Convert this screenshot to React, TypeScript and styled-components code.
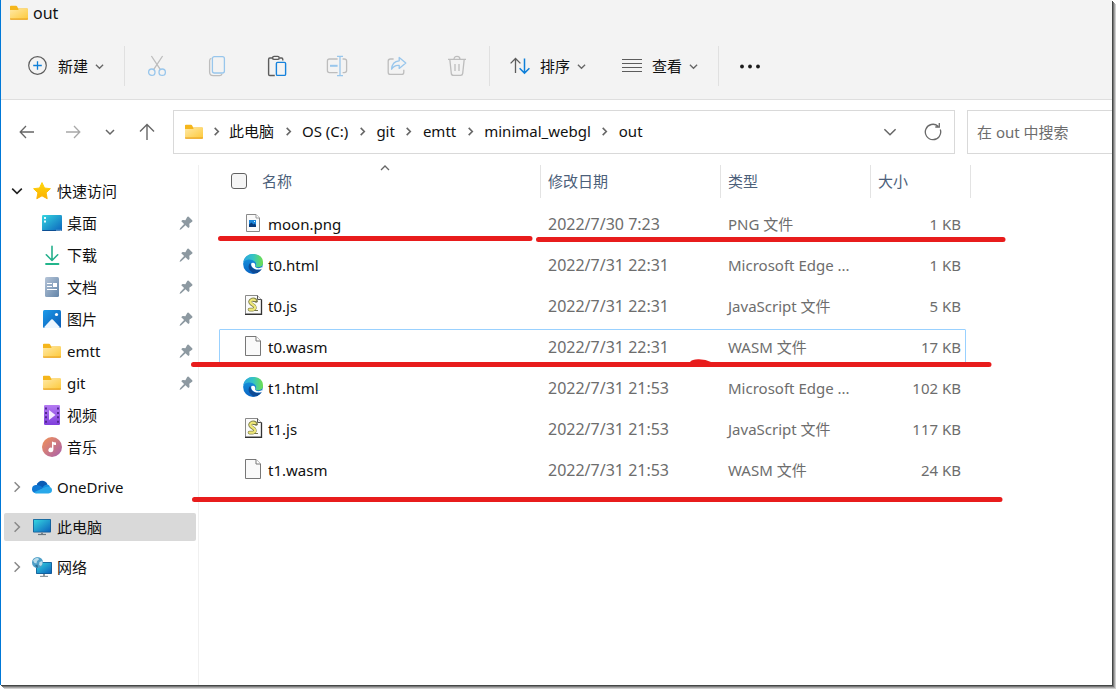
import React from "react";
import styled, { createGlobalStyle, css } from "styled-components";

const GlobalStyle = createGlobalStyle`
  *, *::before, *::after { box-sizing: border-box; }
  body {
    margin: 0;
    background: #fff;
    color: #111;
    font-family: "Noto Sans", "Noto Sans CJK SC", sans-serif;
    font-size: 15px;
    line-height: 20px;
  }
  button, input { font: inherit; color: inherit; }
  svg { display: block; flex: none; }
`;

/* ---------- window frame ---------- */

const Page = styled.div`
  display: flex;
  min-height: 100vh;
  padding: 0 4px 4px 0;
  overflow: hidden;
`;

const Window = styled.div`
  position: relative;
  flex: 1;
  min-width: 0;
  display: flex;
  flex-direction: column;
  border-left: 1px solid #0078d7;
  background: #fff;
  box-shadow: 1px 1px 0 #444746, 2px 2px 0 #777, 3px 3px 0 #a6a6a6, 4px 4px 0 #cfcfcf;
`;

const Header = styled.header`
  background: #f3f3f3;
  border-bottom: 1px solid #dedede;
`;

const TitleBar = styled.div`
  display: flex;
  align-items: center;
  gap: 4px;
  height: 33px;
  padding: 0 0 8px 8px;
`;

const Title = styled.h1`
  margin: 0;
  font-size: 16px;
  font-weight: 400;
`;

const Toolbar = styled.div`
  display: flex;
  align-items: center;
  height: 66px;
  padding-left: 9px;
`;

const PlainButton = styled.button`
  display: flex;
  align-items: center;
  justify-content: center;
  padding: 0;
  border: 0;
  background: none;
`;

const ToolButton = styled(PlainButton)<{ $narrow?: boolean }>`
  width: ${(p) => (p.$narrow ? 58 : 60)}px;
  height: 40px;
`;

const LabelButton = styled(PlainButton)`
  height: 40px;
  padding: 0 18px;
`;

const ButtonLabel = styled.span`
  margin: 0 7px 0 10px;
`;

const Divider = styled.span`
  width: 1px;
  height: 40px;
  margin: 0 2px;
  background: #e0e0e0;
`;

/* ---------- address row ---------- */

const AddressRow = styled.div`
  display: flex;
  align-items: center;
  padding: 10px 0 11px 3px;
`;

const NavButton = styled(PlainButton)<{ $small?: boolean }>`
  width: ${(p) => (p.$small ? 28 : 46)}px;
  height: 44px;
`;

const AddressBox = styled.nav`
  flex: 1;
  min-width: 0;
  display: flex;
  align-items: center;
  height: 44px;
  margin: 0 12px 0 3px;
  padding-left: 10px;
  border: 1px solid #d9d9d9;
`;

const Crumbs = styled.ol`
  flex: 1;
  display: flex;
  margin: 0;
  padding: 0 0 2px;
  list-style: none;
`;

const CrumbArrow = styled.span`
  display: flex;
  justify-content: center;
  width: 28px;
`;

const Crumb = styled.li`
  display: flex;
  align-items: center;
  white-space: nowrap;

  a {
    color: #111;
    text-decoration: none;
  }

  &:first-child ${CrumbArrow} {
    width: 25px;
  }
`;

const BoxButton = styled(PlainButton)`
  width: 43px;
  height: 42px;
`;

const SearchBox = styled.input`
  flex: none;
  width: 145px;
  height: 44px;
  padding: 0 9px;
  border: 1px solid #d9d9d9;
  border-right: 0;
  border-radius: 0;
  background: #fff;
  outline: none;

  &::placeholder {
    color: #6d6d6d;
    opacity: 1;
  }
`;

/* ---------- body ---------- */

const Body = styled.div`
  flex: 1;
  display: flex;
`;

const Sidebar = styled.nav`
  width: 198px;
  flex: none;
  padding: 10px 2px 0 3px;
  border-right: 1px solid #f0f0f0;

  ul {
    margin: 0;
    padding: 0;
    list-style: none;
  }
`;

const SideLink = styled.a<{ $child?: boolean; $selected?: boolean; $lead?: boolean }>`
  display: flex;
  align-items: center;
  gap: 5px;
  height: 28px;
  margin-bottom: 12px;
  border-radius: 2px;
  color: #111;
  text-decoration: none;
  background: ${(p) => (p.$selected ? "#d9d9d9" : "none")};

  ${(p) =>
    p.$lead &&
    css`
      height: 32px;
      margin-bottom: 0;
    `}
  ${(p) =>
    p.$child &&
    css`
      height: 32px;
      margin-bottom: 0;
      padding: 0 3px 0 38px;
    `}
`;

const ChildList = styled.ul`
  && {
    margin-bottom: 10px;
  }
`;

const Twisty = styled.span`
  display: flex;
  justify-content: center;
  width: 23px;
  padding-left: 2px;
`;

const SideText = styled.span`
  flex: 1;
`;

const Files = styled.main`
  flex: 1;
  min-width: 0;
  padding-left: 20px;
`;

const Table = styled.table`
  display: block;

  thead, tbody {
    display: block;
  }
`;

const HeadRow = styled.tr`
  display: grid;
  grid-template-columns: 322px 180px 150px 100px;
  height: 33px;
  margin-bottom: 8px;
`;

const HeadCell = styled.th`
  position: relative;
  display: flex;
  align-items: center;
  gap: 15px;
  padding: 0 0 2px 7px;
  border-right: 1px solid #e3e3e3;
  color: #4c607a;
  font-weight: 400;

  &:first-child {
    padding-left: 12px;
  }
`;

const SortMark = styled.span`
  position: absolute;
  top: 0;
  left: 50%;
`;

const CheckBox = styled.input`
  appearance: none;
  width: 16px;
  height: 16px;
  margin: 0;
  border: 1px solid #616161;
  border-radius: 3px;
  background: #f5f5f5;
`;

const FileRow = styled.tr<{ $focused?: boolean }>`
  display: grid;
  grid-template-columns: 320px 180px 150px 95px;
  width: 747px;
  height: 37px;
  margin-bottom: 4px;
  border: 1px solid ${(p) => (p.$focused ? "#99d1ff" : "transparent")};
  border-radius: 1px;
`;

const Cell = styled.td<{ $right?: boolean }>`
  padding: 7px 4px 0 8px;
  color: #6d6d6d;
  text-align: ${(p) => (p.$right ? "right" : "left")};
  white-space: nowrap;
`;

const DateCell = styled(Cell)`
  font-size: 16px;
`;

const NameCell = styled(Cell)`
  display: flex;
  align-items: flex-start;
  gap: 5px;
  padding-left: 23px;
  color: #111;
`;

const IconSlot = styled.span`
  display: flex;
  margin-top: -1px;
`;

const Marks = styled.svg`
  position: absolute;
  top: 0;
  left: -1px;
  pointer-events: none;
`;

/* ---------- icons ---------- */

type Dir = "down" | "right" | "up";

const chevPath: Record<Dir, string> = {
  down: "M1 3 L5 7 L9 3",
  right: "M3 1 L7 5 L3 9",
  up: "M1 5 L5 1 L9 5",
};

const Chevron = ({ dir = "down", size = 10, color = "#666", weight = 1.3 }: { dir?: Dir; size?: number; color?: string; weight?: number }) => (
  <svg width={size} height={size} viewBox="0 0 10 10" fill="none" stroke={color} strokeWidth={(weight * 10) / size}>
    <path d={chevPath[dir]} />
  </svg>
);

const FolderIcon = () => (
  <svg width="20" height="20" viewBox="0 0 20 20">
    <path d="M1 3.6q0-.9.9-.9h5.2q.6 0 .9.5l1.2 2.3H18q1 0 1 1V10H1z" fill="#f5b61c" />
    <path d="M1 7h8l1.4-1.5H18q1 0 1 .9v9.3q0 .8-.8.8H1.8q-.8 0-.8-.8z" fill="url(#folderFace)" />
    <path d="M1 15.6v.3q0 .8.8.8h16.4q.8 0 .8-.8v-.3z" fill="#eaa21c" />
  </svg>
);

const Gradients = () => (
  <GradientSheet width="0" height="0" aria-hidden>
    <defs>
      <linearGradient id="folderFace" x1="0" y1="0" x2="1" y2="1">
        <stop offset="0" stopColor="#ffe9a6" />
        <stop offset="1" stopColor="#fdc93a" />
      </linearGradient>
      <linearGradient id="screen" x1="0" y1="0" x2="1" y2="1">
        <stop offset="0" stopColor="#35d6e0" />
        <stop offset="1" stopColor="#0c63bd" />
      </linearGradient>
      <linearGradient id="star" x1="0" y1="0" x2="0" y2="1">
        <stop offset="0" stopColor="#ffd60a" />
        <stop offset="1" stopColor="#fbb003" />
      </linearGradient>
      <linearGradient id="doc" x1="0" y1="0" x2="1" y2="1">
        <stop offset="0" stopColor="#b6c5d8" />
        <stop offset="1" stopColor="#6284a8" />
      </linearGradient>
      <linearGradient id="photo" x1="0" y1="0" x2="1" y2="1">
        <stop offset="0" stopColor="#1d9bea" />
        <stop offset="1" stopColor="#0a5ab4" />
      </linearGradient>
      <linearGradient id="film" x1="0" y1="0" x2="0" y2="1">
        <stop offset="0" stopColor="#b47af2" />
        <stop offset="1" stopColor="#7f3fdc" />
      </linearGradient>
      <linearGradient id="music" x1="0" y1="0" x2="1" y2="1">
        <stop offset="0" stopColor="#f39355" />
        <stop offset="1" stopColor="#a75fae" />
      </linearGradient>
      <linearGradient id="edgeTop" x1="0" y1="0" x2="1" y2="0">
        <stop offset="0" stopColor="#2ea5df" />
        <stop offset=".5" stopColor="#35c4c4" />
        <stop offset="1" stopColor="#6fe04b" />
      </linearGradient>
      <linearGradient id="edgeLeft" x1="0" y1="0" x2="0" y2="1">
        <stop offset="0" stopColor="#1a9be0" />
        <stop offset="1" stopColor="#0864c4" />
      </linearGradient>
    </defs>
  </GradientSheet>
);

const GradientSheet = styled.svg`
  position: absolute;
`;

const NewIcon = () => (
  <svg width="20" height="20" viewBox="0 0 20 20" fill="none">
    <circle cx="9.5" cy="9.5" r="8.8" stroke="#5c5c5c" strokeWidth="1.2" />
    <path d="M9.5 5.2v8.6M5.2 9.5h8.6" stroke="#0f7fd8" strokeWidth="1.3" />
  </svg>
);

const CutIcon = () => (
  <svg width="20" height="22" viewBox="0 0 20 22" fill="none" strokeWidth="1.3">
    <path d="M4.4 1 13.4 14.6M15.6 1 6.6 14.6" stroke="#bdbdbd" />
    <circle cx="4.8" cy="17.2" r="3.2" stroke="#98c6ec" />
    <circle cx="15.2" cy="17.2" r="3.2" stroke="#98c6ec" />
  </svg>
);

const CopyIcon = () => (
  <svg width="18" height="22" viewBox="0 0 18 22" fill="none" strokeWidth="1.3">
    <path d="M3.4 3.4Q1.6 3.8 1.6 5.8V17q0 3.6 3.6 3.6h6.4q1.8 0 2.4-1.6" stroke="#bdbdbd" />
    <rect x="4.4" y="1.6" width="12" height="16.4" rx="2" stroke="#98c6ec" />
  </svg>
);

const PasteIcon = () => (
  <svg width="20" height="22" viewBox="0 0 20 22" fill="none" strokeWidth="1.4">
    <path d="M5.4 3H2.8Q1.6 3 1.6 4.4v14.8q0 1.3 1.2 1.3h5M12.4 3h2.2q1.2 0 1.2 1.4v1.2" stroke="#5c5c5c" />
    <rect x="5.6" y="1.4" width="6.6" height="3" rx="1.5" stroke="#5c5c5c" />
    <rect x="9.4" y="7.4" width="9.2" height="13" rx="1.2" stroke="#1682dc" />
  </svg>
);

const RenameIcon = () => (
  <svg width="22" height="22" viewBox="0 0 22 22" fill="none" strokeWidth="1.3">
    <path d="M11.6 4H3.4Q1.4 4 1.4 6v9.6q0 2 2 2h8.2M16.6 4h1.6q2.4 0 2.4 2v9.6q0 2-2.4 2h-1.6" stroke="#bdbdbd" />
    <path d="M14 1.6v18.8M11 1.4h6M11 20.6h6" stroke="#98c6ec" />
    <path d="M4 10.8h7.6" stroke="#98c6ec" strokeWidth="2" />
  </svg>
);

const ShareIcon = () => (
  <svg width="20" height="20" viewBox="0 0 20 20" fill="none" strokeWidth="1.3" strokeLinejoin="round">
    <path d="M6.6 3H3.4Q1.2 3 1.2 5.2v11q0 2.2 2.2 2.2h11.2q2.2 0 2.2-2.2v-2.4" stroke="#bdbdbd" />
    <path d="M12.2 1.4 18.8 7l-6.6 5.4V9.4Q7.4 8.800 4.600 13.200 5 5.400 12.200 4.800z" stroke="#98c6ec" />
  </svg>
);

const DeleteIcon = () => (
  <svg width="20" height="22" viewBox="0 0 20 22" fill="none" stroke="#bdbdbd" strokeWidth="1.3">
    <path d="M1 4.4h18M7 4.4q0-3 3-3t3 3M2.8 4.4l1.5 14q.2 2 2.2 2h7q2 0 2.2-2l1.5-14M8 9v7M12 9v7" />
  </svg>
);

const SortIcon = () => (
  <svg width="20" height="18" viewBox="0 0 20 18" fill="none" strokeWidth="1.3">
    <path d="M5.5 16V1.5M.6 6.400 5.500 1.500 10.400 6.400" stroke="#5c5c5c" />
    <path d="M14.5 1.500V16M9.600 11.200l4.900 4.900 4.900-4.900" stroke="#0f7fd8" strokeWidth="1.5" />
  </svg>
);

const ViewIcon = () => (
  <svg width="20" height="18" viewBox="0 0 20 18" stroke="#5c5c5c">
    <path d="M0 2.500h20M0 6.500h20M0 10.500h20M0 14.500h20" />
  </svg>
);

const MoreIcon = () => (
  <svg width="22" height="6" viewBox="0 0 22 6" fill="#1b1b1b">
    <circle cx="3" cy="3.500" r="1.900" />
    <circle cx="11" cy="3.500" r="1.900" />
    <circle cx="19" cy="3.500" r="1.900" />
  </svg>
);

const BackIcon = () => (
  <svg width="16" height="14" viewBox="0 0 16 14" fill="none" stroke="#666" strokeWidth="1.3">
    <path d="M15 7H1.500M7 1 1.200 7 7 13" />
  </svg>
);

const ForwardIcon = () => (
  <svg width="16" height="14" viewBox="0 0 16 14" fill="none" stroke="#a8a8a8" strokeWidth="1.3">
    <path d="M1 7h13.500M9 1l5.800 6L9 13" />
  </svg>
);

const UpIcon = () => (
  <svg width="16" height="18" viewBox="0 0 16 18" fill="none" stroke="#666" strokeWidth="1.4">
    <path d="M8 17V1.500M1 8.500l7-7 7 7" />
  </svg>
);

const RefreshIcon = () => (
  <svg width="18" height="18" viewBox="0 0 18 18" fill="none" stroke="#6a6a6a" strokeWidth="1.3">
    <path d="M16.300 6.500a7.700 7.700 0 1 1-2.200-3.300M15.300 0v4h-4" />
  </svg>
);

const StarIcon = () => (
  <svg width="20" height="20" viewBox="0 0 20 20">
    <path
      d="M10 1.600 12.500 7l5.900.7-4.300 4.100 1.100 5.900L10 14.800l-5.200 2.900 1.100-5.900L1.600 7.700 7.500 7z"
      fill="url(#star)"
      stroke="url(#star)"
      strokeLinejoin="round"
    />
  </svg>
);

const DesktopIcon = () => (
  <svg width="20" height="20" viewBox="0 0 20 20">
    <rect x="0" y="2" width="20" height="16" rx="1.200" fill="url(#screen)" />
    <path d="M2 4h2v2H2zM2 7.500h2v2H2z" fill="#e6fbff" />
    <path d="M0 17h20q0 1-1 1H1q-1 0-1-1z" fill="#0d4f94" />
    <path d="M14.500 17.300h1M16.500 17.300h1M18.300 17.300h1" stroke="#cde8ff" />
  </svg>
);

const DownloadIcon = () => (
  <svg width="20" height="20" viewBox="0 0 20 20" fill="none" strokeLinecap="round" strokeLinejoin="round">
    <path d="M10 1.200V15.500M4.300 9.800 10 15.500 15.700 9.800" stroke="#25b08c" strokeWidth="1.600" />
    <path d="M4 19h12.500" stroke="#22b58b" strokeWidth="1.800" />
  </svg>
);

const DocumentIcon = () => (
  <svg width="20" height="20" viewBox="0 0 20 20">
    <rect x="3" y="0" width="14" height="20" rx="1.500" fill="url(#doc)" />
    <path d="M5 6.500h5M5 9.500h5M5 12.500h10" stroke="#fff" strokeWidth="1.200" />
    <rect x="11" y="6" width="4" height="4" fill="#fff" />
  </svg>
);

const PicturesIcon = () => (
  <svg width="20" height="20" viewBox="0 0 20 20">
    <rect x="1" y="1" width="18" height="18" rx="1.500" fill="url(#photo)" />
    <path d="M2 18.200 9.200 10.600q.8-.8 1.600 0L18 18.200q-.3.800-1.500.8h-13Q2.300 19 2 18.200z" fill="#eef7ff" />
    <circle cx="14.500" cy="5.500" r="1.600" fill="#fff" />
  </svg>
);

const VideoIcon = () => (
  <svg width="20" height="20" viewBox="0 0 20 20">
    <rect x="2" y="0" width="16" height="20" rx="1.200" fill="url(#film)" />
    <path d="M4 2.500v16M16 2.500v16" stroke="#4b2388" strokeWidth="1.800" strokeDasharray="2 2.400" />
    <path d="M7 5v10l6.500-5z" fill="#f4ebff" />
  </svg>
);

const MusicIcon = () => (
  <svg width="20" height="20" viewBox="0 0 20 20">
    <circle cx="10" cy="10" r="10" fill="url(#music)" />
    <path d="M10 4.500q2 1 4 1v2.400q-1.400 0-2.600-.5v5.400a2.500 2.300 0 1 1-1.400-2z" fill="#fff" />
  </svg>
);

const CloudIcon = () => (
  <svg width="20" height="20" viewBox="0 0 20 20">
    <path d="M4.600 8.300Q6 3.800 10.200 3.800q3.800 0 5.300 3.700L10 12z" fill="#0a5cb5" />
    <path d="M3.600 8Q8 7.500 11.500 11L4 16.300Q0 15.700 0 12.200 0 8.600 3.600 8z" fill="#0f78d4" />
    <path d="M10.500 10.200Q12.500 7.400 15.200 7.400q2.300 0 2.800 2.600L12 12.500z" fill="#1490df" />
    <path d="M4 16.400h12.500q3.500 0 3.500-3.300 0-3.200-3.800-3.400-2.200-.2-4.200 1L2 15.300q.8 1 2 1.100z" fill="#28a8ea" />
  </svg>
);

const MonitorIcon = () => (
  <svg width="20" height="20" viewBox="0 0 20 20">
    <rect x="1" y="2" width="18" height="13.500" rx=".8" fill="#145a94" />
    <rect x="1.800" y="2.800" width="16.400" height="11.900" fill="url(#screen)" />
    <path d="M9 15.500h2v2H9z" fill="#7c8790" />
    <path d="M6 17.500h8" stroke="#6c7780" strokeWidth="1.200" />
  </svg>
);

const NetworkIcon = () => (
  <svg width="20" height="20" viewBox="0 0 20 20">
    <rect x="4" y="5" width="16" height="12" rx=".8" fill="#145a94" />
    <rect x="4.800" y="5.800" width="14.400" height="10.400" fill="url(#screen)" />
    <path d="M11 17h2v2h-2z" fill="#8d989f" />
    <path d="M8 19.400h8" stroke="#8d989f" strokeWidth="1.200" />
    <circle cx="5.500" cy="5.500" r="5.500" fill="#4f9fc8" />
    <path d="M1 3.500Q3 .6 6 .8L7 2.500 5 4 4.500 6.500 2.500 6zM7.500 5l2.800-1q.8 3-1.300 5L7 8z" fill="#b9dcea" />
    <path d="M3 8.500 5.500 7.500 6 10.800Q4 10.800 3 8.500z" fill="#2d7096" />
  </svg>
);

const PinIcon = () => (
  <svg width="14" height="14" viewBox="0 0 14 14">
    <path d="M8.200.9Q9 .2 9.700.8L13.200 4.300q.7.700-.1 1.400L10.300 7.800l.2 2.600q0 .6-.5 1L9.300 12 6.500 9.300 2.200 13.300 .6 14 1.100 12.300 5.100 8 2.300 5.200l.8-.9q.4-.4 1-.3l2.300.2z" fill="#8d99a1" />
  </svg>
);

const PngFileIcon = () => (
  <svg width="20" height="20" viewBox="0 0 20 20">
    <path d="M3.500 1.500h9.500l3.500 3.500v13.500h-13z" fill="#fafafa" stroke="#8a8a8a" />
    <path d="M13 1.500V5h3.500" fill="#fff" stroke="#9a9a9a" />
    <rect x="6" y="7" width="7" height="7" fill="#1b86da" />
    <path d="M6 11.500 8.500 9.500l2 2 1-1 1.500 1.500V14H6z" fill="#073a7a" />
    <path d="M11 8h1v1h-1z" fill="#e5f4ff" />
  </svg>
);

const EdgeIcon = () => (
  <svg width="20" height="20" viewBox="0 0 20 20">
    <circle cx="10" cy="10" r="9.900" fill="url(#edgeLeft)" />
    <path d="M.2 8.500Q1.500 0 10 0q9.900.3 10 8.400 0 4.300-4.500 4.900-3.600.2-3-1.300 1.400-2-.5-4.200Q9 5 5.200 5.600 1.600 6.300.2 8.500z" fill="url(#edgeTop)" />
    <path d="M7.200 8.800Q4 12.500 7 16.500q3 3.800 7.300 2.400 3-1.500 4.500-4-3 1.600-6 .9Q7.500 14 7.200 8.800z" fill="#0d4a95" />
    <path d="M8.200 9.600q1.200-1.500 3-.6 1.500 1.200.9 2.900-.4 1.200 1.200 1.900 2.600 1 6.300-.7l-.8 1.800Q15 16.300 11.800 14.900 7.800 13 8.200 9.600z" fill="#fff" />
  </svg>
);

const ScriptFileIcon = () => (
  <svg width="20" height="20" viewBox="0 0 20 20">
    <path d="M2.500.5h12l4 4v14.500h-16z" fill="#fbfbfb" stroke="#8a8a8a" />
    <path d="M2 19.500h16.500V4.500" fill="none" stroke="#333" strokeWidth="1.300" />
    <path d="M14.500.5v4h4" fill="#eee" stroke="#555" />
    <path d="M13 6Q12 3.800 9 4.600 5.600 6.200 8 8.600l3.200 2.300q1.800 2.800-1.200 3.700H6.500" fill="none" stroke="#858550" strokeWidth="3.600" strokeLinecap="round" />
    <path d="M12 5.600Q11 4 9 4.800 6 6.400 8.200 8.500l3.200 2.400q1.800 2.600-1.200 3.700H6.500" fill="none" stroke="#efe878" strokeWidth="2.200" strokeLinecap="round" />
    <path d="M9.500 6.500h5M11.500 15.500h3.500" stroke="#77774a" />
  </svg>
);

const BlankFileIcon = () => (
  <svg width="20" height="20" viewBox="0 0 20 20">
    <path d="M2.500.5h10.500l4.500 4.500v14.500h-15z" fill="#fafafa" stroke="#777" />
    <path d="M13 .5V5h4.500" fill="#fff" stroke="#777" />
  </svg>
);

/* ---------- data ---------- */

const quickLinks = [
  { label: "桌面", icon: <DesktopIcon />, pinned: true },
  { label: "下载", icon: <DownloadIcon />, pinned: true },
  { label: "文档", icon: <DocumentIcon />, pinned: true },
  { label: "图片", icon: <PicturesIcon />, pinned: true },
  { label: "emtt", icon: <FolderIcon />, pinned: true },
  { label: "git", icon: <FolderIcon />, pinned: true },
  { label: "视频", icon: <VideoIcon />, pinned: false },
  { label: "音乐", icon: <MusicIcon />, pinned: false },
];

const places = [
  { label: "OneDrive", icon: <CloudIcon />, selected: false },
  { label: "此电脑", icon: <MonitorIcon />, selected: true },
  { label: "网络", icon: <NetworkIcon />, selected: false },
];

const crumbs = ["此电脑", "OS (C:)", "git", "emtt", "minimal_webgl", "out"];

const icons = {
  png: <PngFileIcon />,
  html: <EdgeIcon />,
  js: <ScriptFileIcon />,
  wasm: <BlankFileIcon />,
};

const files: { name: string; kind: keyof typeof icons; date: string; type: string; size: string; focused?: boolean }[] = [
  { name: "moon.png", kind: "png", date: "2022/7/30 7:23", type: "PNG 文件", size: "1 KB" },
  { name: "t0.html", kind: "html", date: "2022/7/31 22:31", type: "Microsoft Edge ...", size: "1 KB" },
  { name: "t0.js", kind: "js", date: "2022/7/31 22:31", type: "JavaScript 文件", size: "5 KB" },
  { name: "t0.wasm", kind: "wasm", date: "2022/7/31 22:31", type: "WASM 文件", size: "17 KB", focused: true },
  { name: "t1.html", kind: "html", date: "2022/7/31 21:53", type: "Microsoft Edge ...", size: "102 KB" },
  { name: "t1.js", kind: "js", date: "2022/7/31 21:53", type: "JavaScript 文件", size: "117 KB" },
  { name: "t1.wasm", kind: "wasm", date: "2022/7/31 21:53", type: "WASM 文件", size: "24 KB" },
];

const tools = [
  { label: "剪切", icon: <CutIcon /> },
  { label: "复制", icon: <CopyIcon /> },
  { label: "粘贴", icon: <PasteIcon /> },
  { label: "重命名", icon: <RenameIcon /> },
  { label: "共享", icon: <ShareIcon /> },
  { label: "删除", icon: <DeleteIcon /> },
];

export default function App() {
  return (
    <Page>
      <GlobalStyle />
      <Gradients />
      <Window>
        <Header>
          <TitleBar>
            <FolderIcon />
            <Title>out</Title>
          </TitleBar>
          <Toolbar>
            <LabelButton>
              <NewIcon />
              <ButtonLabel>新建</ButtonLabel>
              <Chevron size={9} />
            </LabelButton>
            <Divider />
            {tools.map((t) => (
              <ToolButton key={t.label} aria-label={t.label}>
                {t.icon}
              </ToolButton>
            ))}
            <Divider />
            <LabelButton>
              <SortIcon />
              <ButtonLabel>排序</ButtonLabel>
              <Chevron size={9} />
            </LabelButton>
            <LabelButton>
              <ViewIcon />
              <ButtonLabel>查看</ButtonLabel>
              <Chevron size={9} />
            </LabelButton>
            <Divider />
            <ToolButton $narrow aria-label="更多">
              <MoreIcon />
            </ToolButton>
          </Toolbar>
        </Header>

        <AddressRow>
          <NavButton aria-label="后退"><BackIcon /></NavButton>
          <NavButton aria-label="前进"><ForwardIcon /></NavButton>
          <NavButton $small aria-label="最近"><Chevron weight={1.5} /></NavButton>
          <NavButton aria-label="向上"><UpIcon /></NavButton>
          <AddressBox>
            <FolderIcon />
            <Crumbs>
              {crumbs.map((c) => (
                <Crumb key={c}>
                  <CrumbArrow>
                    <Chevron dir="right" size={9} weight={1.6} />
                  </CrumbArrow>
                  <a href="#">{c}</a>
                </Crumb>
              ))}
            </Crumbs>
            <BoxButton aria-label="历史"><Chevron size={14} weight={1.5} /></BoxButton>
            <BoxButton aria-label="刷新"><RefreshIcon /></BoxButton>
          </AddressBox>
          <SearchBox type="text" aria-label="搜索" placeholder="在 out 中搜索" />
        </AddressRow>

        <Body>
          <Sidebar>
            <SideLink href="#" $lead>
              <Twisty><Chevron size={12} color="#222" weight={1.6} /></Twisty>
              <StarIcon />
              <SideText>快速访问</SideText>
            </SideLink>
            <ChildList>
              {quickLinks.map((l) => (
                <li key={l.label}>
                  <SideLink href="#" $child>
                    {l.icon}
                    <SideText>{l.label}</SideText>
                    {l.pinned && <PinIcon />}
                  </SideLink>
                </li>
              ))}
            </ChildList>
            <ul>
              {places.map((p) => (
                <li key={p.label}>
                  <SideLink href="#" $selected={p.selected}>
                    <Twisty><Chevron dir="right" size={12} color="#888" weight={1.5} /></Twisty>
                    {p.icon}
                    <SideText>{p.label}</SideText>
                  </SideLink>
                </li>
              ))}
            </ul>
          </Sidebar>

          <Files>
            <Table>
              <thead>
                <HeadRow>
                  <HeadCell>
                    <CheckBox type="checkbox" aria-label="全选" />
                    名称
                    <SortMark><Chevron dir="up" /></SortMark>
                  </HeadCell>
                  <HeadCell>修改日期</HeadCell>
                  <HeadCell>类型</HeadCell>
                  <HeadCell>大小</HeadCell>
                </HeadRow>
              </thead>
              <tbody>
                {files.map((f) => (
                  <FileRow key={f.name} $focused={f.focused}>
                    <NameCell>
                      <IconSlot>{icons[f.kind]}</IconSlot>
                      {f.name}
                    </NameCell>
                    <DateCell>{f.date}</DateCell>
                    <Cell>{f.type}</Cell>
                    <Cell $right>{f.size}</Cell>
                  </FileRow>
                ))}
              </tbody>
            </Table>
          </Files>
        </Body>

        <Marks width="1010" height="510" viewBox="0 0 1010 510" fill="none" stroke="#e81c1c" strokeWidth="5" strokeLinecap="round">
          <path d="M220.500 238.500H530M538.500 239.500H1003M193.500 364.500H989M194.500 499.500H1000" />
          <path d="M690 362Q692 359 699 359.200 706 359.500 711 362z" fill="#e81c1c" stroke="none" />
        </Marks>
      </Window>
    </Page>
  );
}
